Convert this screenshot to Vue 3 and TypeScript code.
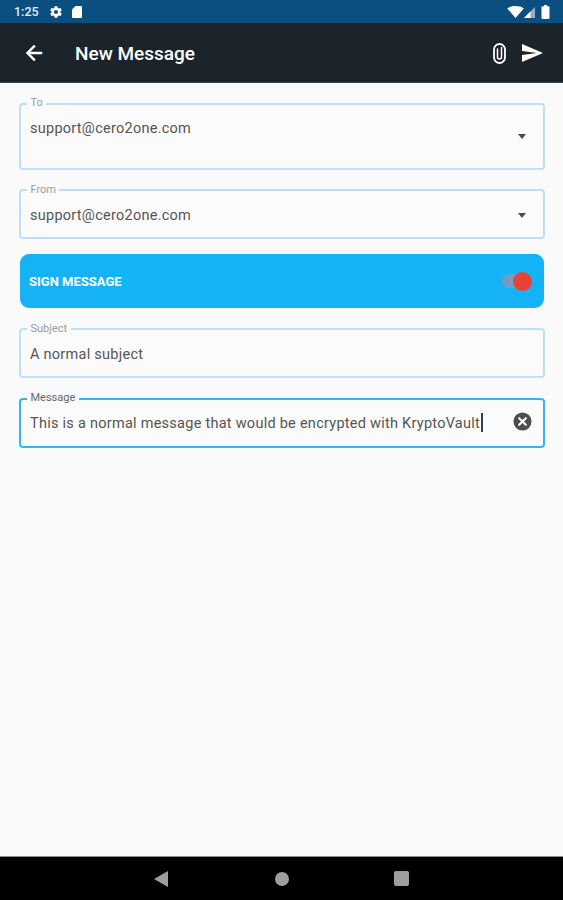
<script setup lang="ts">
interface Field { label: string; value: string; kind: 'tall' | 'select' | 'plain' }
const to: Field = { label: 'To', value: 'support@cero2one.com', kind: 'tall' }
const from: Field = { label: 'From', value: 'support@cero2one.com', kind: 'select' }
const subject: Field = { label: 'Subject', value: 'A normal subject', kind: 'plain' }
</script>

<template>
  <div class="screen">
    <div class="status">
      <span class="time">1:25</span>
      <svg class="st-gear" viewBox="0 0 24 24"><path fill="#fff" d="M19.4 13c.04-.32.1-.66.1-1s-.06-.68-.1-1l2.1-1.65c.2-.15.25-.42.13-.64l-2-3.46c-.12-.22-.4-.3-.6-.22l-2.5 1c-.52-.4-1.08-.73-1.7-.98l-.37-2.65A.5.5 0 0 0 14 2h-4a.5.5 0 0 0-.5.42l-.37 2.65c-.62.25-1.18.58-1.7.98l-2.5-1c-.22-.08-.48 0-.6.22l-2 3.46c-.13.22-.07.49.12.64L4.6 11c-.04.32-.1.66-.1 1s.06.68.1 1l-2.1 1.65c-.2.15-.25.42-.13.64l2 3.46c.12.22.4.3.6.22l2.5-1c.52.4 1.08.73 1.7.98l.37 2.65c.04.24.25.42.5.42h4c.25 0 .46-.18.5-.42l.37-2.65c.62-.25 1.18-.58 1.7-.98l2.5 1c.22.08.48 0 .6-.22l2-3.46c.12-.22.07-.49-.12-.64L19.4 13zM12 15.5a3.5 3.5 0 1 1 0-7 3.5 3.5 0 0 1 0 7z"/></svg>
      <svg class="st-card" viewBox="0 0 12 14"><path fill="#fff" d="M4.5 1H10a1 1 0 0 1 1 1v10a1 1 0 0 1-1 1H2a1 1 0 0 1-1-1V4.5z"/></svg>
      <span class="spacer"></span>
      <svg class="st-wifi" viewBox="0 0 18 13"><path fill="#fff" d="M0 2.6C2.4.9 5.6 0 9 0s6.600.9 9 2.600L9 13z"/></svg>
      <svg class="st-signal" viewBox="0 0 12 12"><path fill="#fff" fill-opacity=".55" d="M12 0v12H0z"/><path fill="#fff" d="M7 5v7H0z"/></svg>
      <svg class="st-batt" viewBox="0 0 8 14"><path fill="#fff" d="M2.500 0h3v1.200H7a1 1 0 0 1 1 1V13a1 1 0 0 1-1 1H1a1 1 0 0 1-1-1V2.200a1 1 0 0 1 1-1h1.500z"/></svg>
    </div>

    <header class="bar">
      <svg class="back" viewBox="0 0 24 24"><path fill="#fff" stroke="#fff" stroke-width=".5" d="M20 11H7.830l5.590-5.590L12 4l-8 8 8 8 1.410-1.410L7.830 13H20z"/></svg>
      <h1 class="title">New Message</h1>
      <span class="spacer"></span>
      <svg class="clip" viewBox="0 0 13 21"><rect x="1" y="1" width="11" height="19" rx="5.500" fill="none" stroke="#fff" stroke-width="1.800"/><path fill="none" stroke="#fff" stroke-width="1.500" stroke-linecap="round" d="M4.500 6v8a2 2 0 0 0 4 0V4.500"/></svg>
      <svg class="send" viewBox="0 0 24 24"><path fill="#fff" d="M2 21l21-9L2 3v7l15 2-15 2z"/></svg>
    </header>

    <main class="form">
      <div class="field tall">
        <span class="legend">{{ to.label }}</span>
        <span class="value">{{ to.value }}</span>
        <span class="caret"></span>
      </div>
      <div class="field">
        <span class="legend low">{{ from.label }}</span>
        <span class="value">{{ from.value }}</span>
        <span class="caret"></span>
      </div>
      <div class="sign">
        <span class="sign-label">SIGN MESSAGE</span>
        <span class="toggle"><span class="thumb"></span></span>
      </div>
      <div class="field subject">
        <span class="legend low">{{ subject.label }}</span>
        <span class="value">{{ subject.value }}</span>
      </div>
      <div class="field focused">
        <span class="legend">Message</span>
        <span class="value">This is a normal message that would be encrypted with KryptoVault<i class="cursor"></i></span>
        <svg class="clear" viewBox="0 0 20 20"><circle cx="10" cy="10" r="9.500" fill="#4d4d4d"/><path stroke="#fff" stroke-width="2.200" stroke-linecap="round" d="M6.500 6.500l7 7M13.500 6.500l-7 7"/></svg>
      </div>
    </main>

    <nav class="nav">
      <svg class="n-back" viewBox="0 0 14 16"><path fill="#9e9e9e" d="M14 0v16L0 8z"/></svg>
      <span class="n-home"></span>
      <span class="n-recent"></span>
    </nav>
  </div>
</template>

<style>
html, body { margin: 0; padding: 0; background: #fafafa; }
</style>

<style scoped>
.screen {
  width: 563px;
  height: 900px;
  display: flex;
  flex-direction: column;
  background: #fafafa;
  font-family: Roboto, "Liberation Sans", sans-serif;
  overflow: hidden;
}
.spacer { flex: 1; }

.status {
  height: 23px;
  flex: none;
  background: #0a4f7f;
  display: flex;
  align-items: center;
  padding: 0 13px 0 14px;
  box-sizing: border-box;
}
.time { color: #e4eef5; font-size: 12.500px; font-weight: 500; width: 26px; }
.st-gear { width: 14px; height: 14px; margin-left: 9px; }
.st-card { width: 12px; height: 14px; margin-left: 8px; }
.st-wifi { width: 17px; height: 12px; }
.st-signal { width: 11px; height: 11px; margin-right: 6px; margin-top: 1px; }
.st-batt { width: 9px; height: 14px; }

.bar {
  height: 60px;
  flex: none;
  background: #1c242b;
  display: flex;
  align-items: center;
  padding: 0 19px 0 22px;
  box-sizing: border-box;
  border-bottom: 1px solid #3a4045;
}
.back { width: 24px; height: 24px; }
.title {
  margin: 2px 0 0 29px;
  color: #fff;
  font-size: 19px;
  font-weight: 500;
}
.clip { width: 13px; height: 21px; margin-right: 14px; margin-top: 1px; }
.send { width: 24px; height: 24px; }

.form {
  flex: 1;
  display: flex;
  flex-direction: column;
  padding: 20px 18px 0 19px;
}
.field {
  position: relative;
  box-sizing: border-box;
  height: 50px;
  border: 2px solid #c0dff6;
  border-radius: 4px;
  margin-bottom: 15px;
  padding: 15px 9px 0;
  display: flex;
  align-items: flex-start;
  background: #fbfbfb;
}
.tall { height: 67px; margin-bottom: 19px; padding-top: 14px; }
.subject { margin-top: 20px; margin-bottom: 20px; }
.focused {
  border-color: #3ab4f0;
  margin-bottom: 0;
  padding-top: 13px;
}
.legend {
  position: absolute;
  top: -8px;
  left: 6px;
  padding: 0 3.500px;
  background: #fafafa;
  font-size: 11px;
  line-height: 12px;
  color: #9a9a9a;
}
.legend.low { top: -7px; }
.focused .legend { color: #5f6a70; }
.value {
  font-size: 14.500px;
  line-height: 20px;
  color: #555;
  letter-spacing: .26px;
  white-space: nowrap;
}
.caret {
  position: absolute;
  right: 17px;
  width: 0;
  height: 0;
  border-left: 4.500px solid transparent;
  border-right: 4.500px solid transparent;
  border-top: 5px solid #4a4a4a;
}
.tall .caret { top: 29px; }
.field:not(.tall) .caret { top: 22px; }
.cursor {
  display: inline-block;
  width: 2px;
  height: 19px;
  margin-left: 1px;
  background: #333f48;
  vertical-align: -4px;
}
.clear {
  position: absolute;
  right: 11px;
  top: 12px;
  width: 19px;
  height: 19px;
}

.sign {
  height: 54px;
  box-sizing: border-box;
  margin: 0 1px;
  background: #15b3f5;
  border-radius: 9px;
  display: flex;
  align-items: center;
  justify-content: space-between;
  padding: 0 13px 0 9px;
}
.sign-label {
  color: #fff;
  font-size: 13px;
  font-weight: 700;
}
.toggle {
  position: relative;
  width: 29px;
  height: 14px;
  border-radius: 7px;
  background: #6f9dc4;
}
.thumb {
  position: absolute;
  right: -1px;
  top: -2.500px;
  width: 19px;
  height: 19px;
  border-radius: 50%;
  background: #ea4136;
}

.nav {
  height: 44px;
  flex: none;
  background: #000;
  border-top: 1px solid #8a8a8a;
  box-sizing: border-box;
  display: flex;
  align-items: center;
  justify-content: center;
}
.n-back { width: 14px; height: 16px; margin-right: 107px; margin-left: -1px; }
.n-home { width: 14px; height: 14px; border-radius: 50%; background: #9e9e9e; margin-right: 105px; }
.n-recent { width: 15px; height: 15px; border-radius: 2px; background: #9e9e9e; }
</style>
